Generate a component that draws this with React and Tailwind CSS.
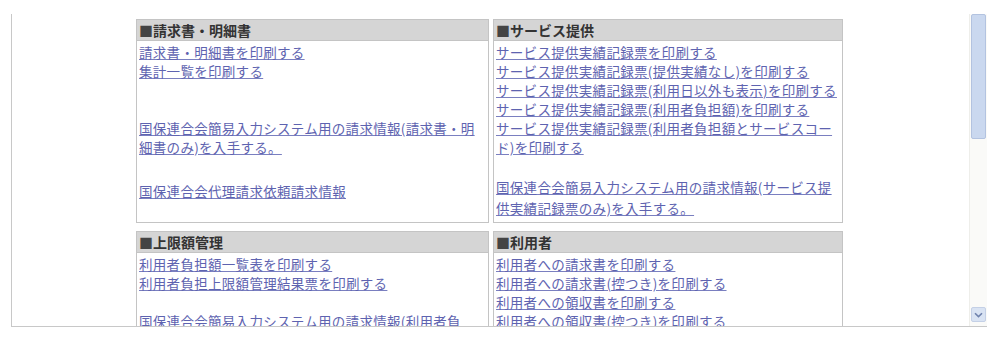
import React from 'react'

const FONT = { fontFamily: '"Noto Sans CJK JP", "Noto Sans", sans-serif' }

function Panel({ title, children }) {
  return (
    <div className="flex flex-col border border-[#c4c4c4] bg-white">
      <div className="h-[21px] shrink-0 border-b border-[#c4c4c4] bg-[#d5d5d5] pl-[2px] text-[14px] font-bold leading-[21px] text-[#333]">
        <span className="text-[#444]">■</span>{title}
      </div>
      <div className="flex flex-col items-start pl-[2px] pt-[2px] text-[13.5px] leading-[19px] tracking-[0.3px]">
        {children}
      </div>
    </div>
  )
}

function Link({ children, className = '' }) {
  return (
    <a href="#" className={`whitespace-nowrap text-[#5e63b0] underline decoration-[#7a7fc0] ${className}`}>
      {children}
    </a>
  )
}

function Scrollbar() {
  return (
    <div className="flex w-[18px] shrink-0 flex-col justify-between border-l border-[#eeeeea] bg-[#fafaf8]">
      <div className="mx-[1px] h-[125px] rounded-[2px] border border-[#b3c3e0] bg-[#cad8ef]" />
      <div className="mx-[1px] mb-[4px] flex h-[15px] items-center justify-center rounded-[2px] border border-[#c4d0e6] bg-[#d9e3f3]">
        <svg width="9" height="6" viewBox="0 0 9 6">
          <path d="M1 1.2 L4.5 4.6 L8 1.2" fill="none" stroke="#6f82ad" strokeWidth="1.6" />
        </svg>
      </div>
    </div>
  )
}

export default function App() {
  return (
    <div className="h-[337px] w-[996px] overflow-hidden bg-white pl-[11px] pt-[14px]" style={FONT}>
      <div className="flex h-[313px] w-[976px] border-b border-l border-[#c8c8c8]">
        <div className="flex-1 overflow-hidden pl-[124px] pt-[5px]">
          <div className="grid grid-cols-[353px_350px] grid-rows-[204px_auto] gap-x-[4px] gap-y-[8px]">
            <Panel title="請求書・明細書">
              <Link>請求書・明細書を印刷する</Link>
              <Link>集計一覧を印刷する</Link>
              <Link className="mt-[38px]">
                国保連合会簡易入力システム用の請求情報(請求書・明<br />細書のみ)を入手する。
              </Link>
              <Link className="mt-[25px]">国保連合会代理請求依頼請求情報</Link>
            </Panel>

            <Panel title="サービス提供">
              <Link>サービス提供実績記録票を印刷する</Link>
              <Link>サービス提供実績記録票(提供実績なし)を印刷する</Link>
              <Link>サービス提供実績記録票(利用日以外も表示)を印刷する</Link>
              <Link>サービス提供実績記録票(利用者負担額)を印刷する</Link>
              <Link>
                サービス提供実績記録票(利用者負担額とサービスコー<br />ド)を印刷する
              </Link>
              <Link className="mt-[20px] leading-[21px]">
                国保連合会簡易入力システム用の請求情報(サービス提<br />供実績記録票のみ)を入手する。
              </Link>
            </Panel>

            <Panel title="上限額管理">
              <Link>利用者負担額一覧表を印刷する</Link>
              <Link>利用者負担上限額管理結果票を印刷する</Link>
              <Link className="mt-[19px]">国保連合会簡易入力システム用の請求情報(利用者負</Link>
            </Panel>

            <Panel title="利用者">
              <Link>利用者への請求書を印刷する</Link>
              <Link>利用者への請求書(控つき)を印刷する</Link>
              <Link>利用者への領収書を印刷する</Link>
              <Link>利用者への領収書(控つき)を印刷する</Link>
            </Panel>
          </div>
        </div>
        <Scrollbar />
      </div>
    </div>
  )
}
